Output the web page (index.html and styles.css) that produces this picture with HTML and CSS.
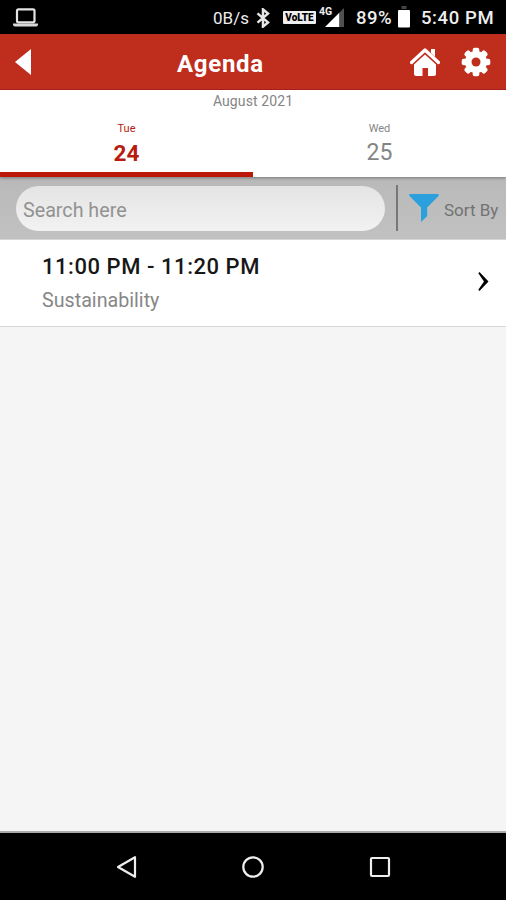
FILE: index.html
```html
<!DOCTYPE html>
<html lang="en">
<head>
<meta charset="utf-8">
<title>Agenda</title>
<link rel="stylesheet" href="styles.css">
</head>
<body>
<div class="screen">
  <div class="status">
    <svg class="laptop" width="25" height="19" viewBox="0 0 25 19"><rect x="4" y="1.3" width="17.5" height="13" rx="1.500" fill="none" stroke="#e4e4e4" stroke-width="2.200"/><path d="M0 15.500h25v1.200q0 1.800-2 1.800H2q-2 0-2-1.800z" fill="#d8d8d8"/></svg>
    <span class="speed">0B/s</span>
    <svg class="bluetooth" width="15" height="20" viewBox="0 0 15 20"><path d="M1.500 5.400l10.500 9-5 4.200V1.400l5 4.200-10.500 9" fill="none" stroke="#e8e8e8" stroke-width="2.500"/></svg>
    <span class="volte">VoLTE</span>
    <span class="network">4G</span>
    <svg class="signal" width="20" height="19" viewBox="0 0 20 19"><path d="M0 19L14.500 4.500V19z" fill="#fff"/><path d="M14.500 4.500L19 0v19h-4.500z" fill="#505050"/></svg>
    <span class="percent">89%</span>
    <svg class="battery" width="12" height="22" viewBox="0 0 12 22"><path d="M3.500 0h5v3h-5z" fill="#444"/><rect y="4" width="12" height="17.500" rx="1" fill="#fff"/></svg>
    <span class="clock">5:40 PM</span>
  </div>
  <header class="appbar">
    <svg class="back" width="16" height="26" viewBox="0 0 16 26"><path d="M0 13L16 0v26z" fill="#fff"/></svg>
    <h1 class="title">Agenda</h1>
    <svg class="home" width="30" height="30" viewBox="0 0 30 30"><path d="M1.500 15.500L15 3l13.500 12.500" fill="none" stroke="#fff" stroke-width="3.300" stroke-linecap="round" stroke-linejoin="round"/><path d="M21 2h4v8l-4-4z" fill="#fff"/><path d="M15 7.500L26 17.500V27q0 2-2 2h-6v-8h-5.500v8H6q-2 0-2-2v-9.500z" fill="#fff"/></svg>
    <svg class="gear" width="30" height="30" viewBox="0 0 30 30"><g fill="#fff"><rect id="tooth" x="11.700" y=".7" width="6.600" height="28.600" rx="2"/><use href="#tooth" transform="rotate(45 15 15)"/><use href="#tooth" transform="rotate(90 15 15)"/><use href="#tooth" transform="rotate(135 15 15)"/><circle cx="15" cy="15" r="11"/></g><circle cx="15" cy="15" r="4.500" fill="#bf2d1c"/></svg>
  </header>
  <section class="dates">
    <div class="month">August 2021</div>
    <div class="tabs">
      <div class="tab active"><span class="day">Tue</span><span class="num">24</span></div>
      <div class="tab"><span class="day">Wed</span><span class="num">25</span></div>
    </div>
  </section>
  <section class="tools">
    <div class="search">Search here</div>
    <div class="divider"></div>
    <svg class="funnel" width="30" height="28" viewBox="0 0 30 28"><path d="M1.500 0h27q2 .3 1 2L18.200 13.500V22L12 28V13.500L.5 2Q-.5.3 1.500 0z" fill="#2ba0dc"/></svg>
    <span class="sort">Sort By</span>
  </section>
  <main class="list">
    <article class="session">
      <div class="info"><div class="time">11:00 PM - 11:20 PM</div><div class="topic">Sustainability</div></div>
      <svg class="chevron" width="11" height="19" viewBox="0 0 11 19"><path d="M.3 1.200L1.500 0 10.500 9.500 1.500 19 .3 17.800 6 9.500z" fill="#000"/></svg>
    </article>
  </main>
  <nav class="nav">
    <svg width="22" height="24" viewBox="0 0 22 24"><path d="M2 12L19 2.200v19.600z" fill="none" stroke="#eee" stroke-width="2.200" stroke-linejoin="round"/></svg>
    <svg width="24" height="24" viewBox="0 0 24 24"><circle cx="12" cy="12" r="9.700" fill="none" stroke="#eee" stroke-width="2.200"/></svg>
    <svg width="22" height="24" viewBox="0 0 22 24"><rect x="2" y="3" width="18" height="18" rx="1" fill="none" stroke="#eee" stroke-width="2.200"/></svg>
  </nav>
</div>
</body>
</html>
```
FILE: styles.css
```css
* { box-sizing: border-box; }
body { margin: 0; font-family: Roboto, sans-serif; }
svg { display: block; flex: none; }
span, .title, .month, .time, .topic { white-space: nowrap; }
.screen { width: 506px; height: 900px; display: flex; flex-direction: column; background: #f5f5f5; }

.status { height: 34px; flex: none; display: flex; align-items: flex-start; background: #000; color: #eee; }
.laptop { margin: 8px 0 0 13px; }
.speed { width: 43px; margin: 8px 0 0 175px; font-size: 17px; line-height: 20px; }
.bluetooth { margin: 8px 0 0 0; }
.volte { width: 33px; height: 13px; margin: 11px 0 0 12px; background: #eee; color: #000; border-radius: 1px; font-size: 10px; font-weight: 900; line-height: 13px; text-align: center; }
.network { width: 14px; margin: 6px 0 0 3px; font-size: 10.500px; font-weight: 700; line-height: 12px; }
.signal { margin: 8px 0 0 -8px; }
.percent { width: 43px; margin: 8px 0 0 11px; font-size: 18.500px; letter-spacing: .5px; font-weight: 500; line-height: 21px; }
.battery { margin: 6px 0 0 -1px; }
.clock { margin: 8px 0 0 11px; font-size: 18.500px; letter-spacing: .6px; font-weight: 500; line-height: 21px; }

.appbar { height: 56px; flex: none; display: flex; align-items: center; background: #bf2d1c; color: #fff; border-bottom: 1px solid #b90c04; }
.back { margin-left: 15px; }
.title { width: 234px; margin: 4px 0 0 146px; font-size: 24px; letter-spacing: .7px; line-height: 28px; font-weight: 700; }
.home { margin-left: -1px; }
.gear { margin-left: 21px; }

.dates { height: 87px; flex: none; background: #fff; color: #858585; text-align: center; position: relative; box-shadow: 0 1px 3px #777; }
.month { height: 30px; padding-top: 2px; font-size: 14px; letter-spacing: .1px; line-height: 18px; }
.tabs { display: flex; height: 57px; }
.tab { flex: 1; display: flex; flex-direction: column; align-items: center; padding-top: 2px; }
.day { font-size: 11px; line-height: 14px; }
.num { margin-top: 4px; font-size: 23px; line-height: 26px; }
.active { color: #b71c10; border-bottom: 5px solid #bb1809; }
.active .num { font-weight: 700; font-size: 22.500px; }

.tools { height: 63px; flex: none; display: flex; align-items: center; background: linear-gradient(#b9b9b9, #c1c1c1); border-bottom: 1px solid #d6d6d6; }
.search { width: 369px; height: 45px; margin-left: 16px; padding-left: 7px; border-radius: 23px; background: linear-gradient(#e4e4e4, #f2f2f2); color: #929292; font-size: 19.700px; line-height: 49px; }
.divider { width: 2px; height: 46px; margin-left: 11px; background: #777; }
.funnel { margin-left: 11px; }
.sort { margin: 4px 0 0 5px; color: #727272; font-size: 17px; line-height: 24px; }

.list { flex: 1; border-bottom: 2px solid #aaa; }
.session { height: 87px; display: flex; align-items: center; background: #fff; border-bottom: 1px solid #d8d8d8; }
.info { width: 436px; margin-left: 42px; }
.time { color: #171717; font-size: 22px; letter-spacing: .55px; line-height: 26px; font-weight: 500; }
.topic { margin-top: 9px; color: #878787; font-size: 19.700px; line-height: 24px; }
.chevron { margin-top: -3px; }

.nav { height: 67px; flex: none; display: grid; grid-template-columns: repeat(3, 126.500px); justify-content: center; align-items: center; justify-items: center; background: #000; }
```
